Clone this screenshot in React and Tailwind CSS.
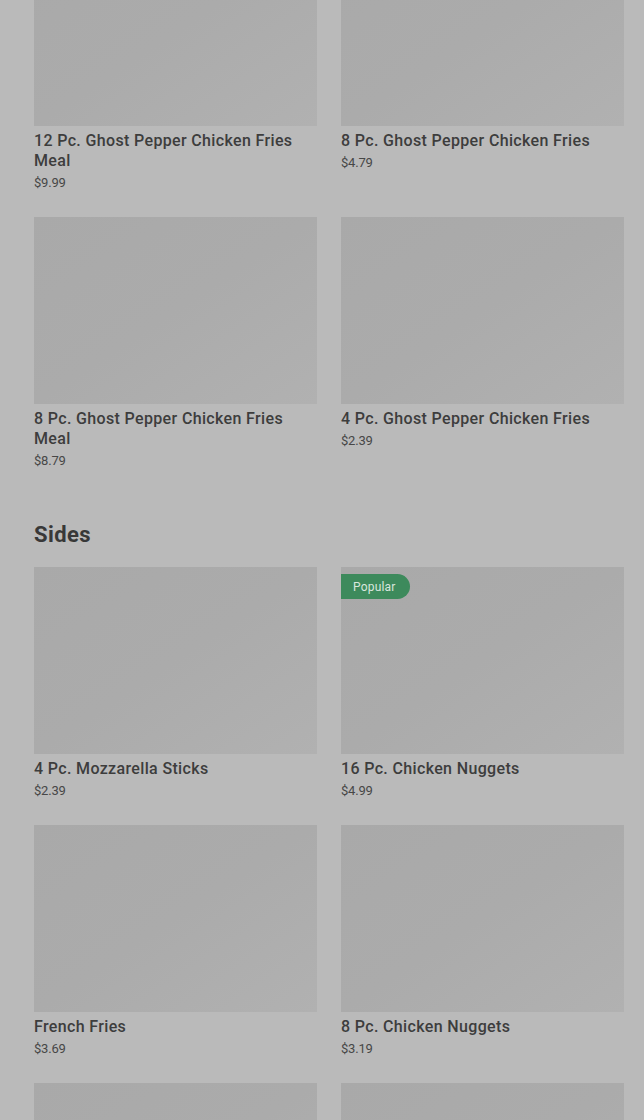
import { useState } from "react";

const friesItems = [
    { name: "12 Pc. Ghost Pepper Chicken Fries Meal", price: "$9.99" },
    { name: "8 Pc. Ghost Pepper Chicken Fries", price: "$4.79" },
    { name: "8 Pc. Ghost Pepper Chicken Fries Meal", price: "$8.79" },
    { name: "4 Pc. Ghost Pepper Chicken Fries", price: "$2.39" },
];

const sides = [
    { name: "4 Pc. Mozzarella Sticks", price: "$2.39" },
    { name: "16 Pc. Chicken Nuggets", price: "$4.99", popular: true },
    { name: "French Fries", price: "$3.69" },
    { name: "8 Pc. Chicken Nuggets", price: "$3.19" },
    { name: "", price: "" },
    { name: "", price: "" },
];

export default function App() {
    const [selected] = useState(null);

    return (
        <div
            className="h-[1120px] w-[644px] overflow-hidden bg-[#bababa]"
            style={{ fontFamily: "Roboto, 'Liberation Sans', sans-serif" }}
        >
            <div className="-mt-[61px] pl-[34px] pr-[20px]">
                {/* current section, scrolled */}
                <div className="grid grid-cols-2 gap-x-[24px] gap-y-[25px]">
                    {friesItems.map((item) => (
                        <MenuCard key={item.name} {...item} />
                    ))}
                </div>

                {/* SIDES */}
                <h2 className="mt-[50px] text-[22px] font-bold leading-[30px] tracking-[0.4px] text-[#383838]">
                    Sides
                </h2>
                <div className="mt-[17px] grid grid-cols-2 gap-x-[24px] gap-y-[25px]">
                    {sides.map((item, i) => (
                        <MenuCard key={i} {...item} active={selected === i} />
                    ))}
                </div>
            </div>
        </div>
    );
}

function MenuCard({ name, price, popular }) {
    return (
        <div className="flex flex-col">
            <div className="relative h-[187px] w-full bg-gradient-to-br from-[#a9a9a9] via-[#ababab] to-[#b1b1b1]">
                {popular && (
                    <span className="absolute left-0 top-[7px] flex h-[25px] items-center rounded-r-full bg-[#3d8a5c] pl-[12px] pr-[14px] text-[12px] tracking-[0.2px] text-[#d8e6dd]">
                        Popular
                    </span>
                )}
            </div>
            {name && (
                <p className="mt-[5px] text-[16px] font-medium leading-[20px] tracking-[0.35px] text-[#3d3d3d]">{name}</p>
            )}
            {price && (
                <p className="mt-[3px] text-[13px] leading-[18px] tracking-[-0.2px] text-[#474747]">{price}</p>
            )}
        </div>
    );
}
